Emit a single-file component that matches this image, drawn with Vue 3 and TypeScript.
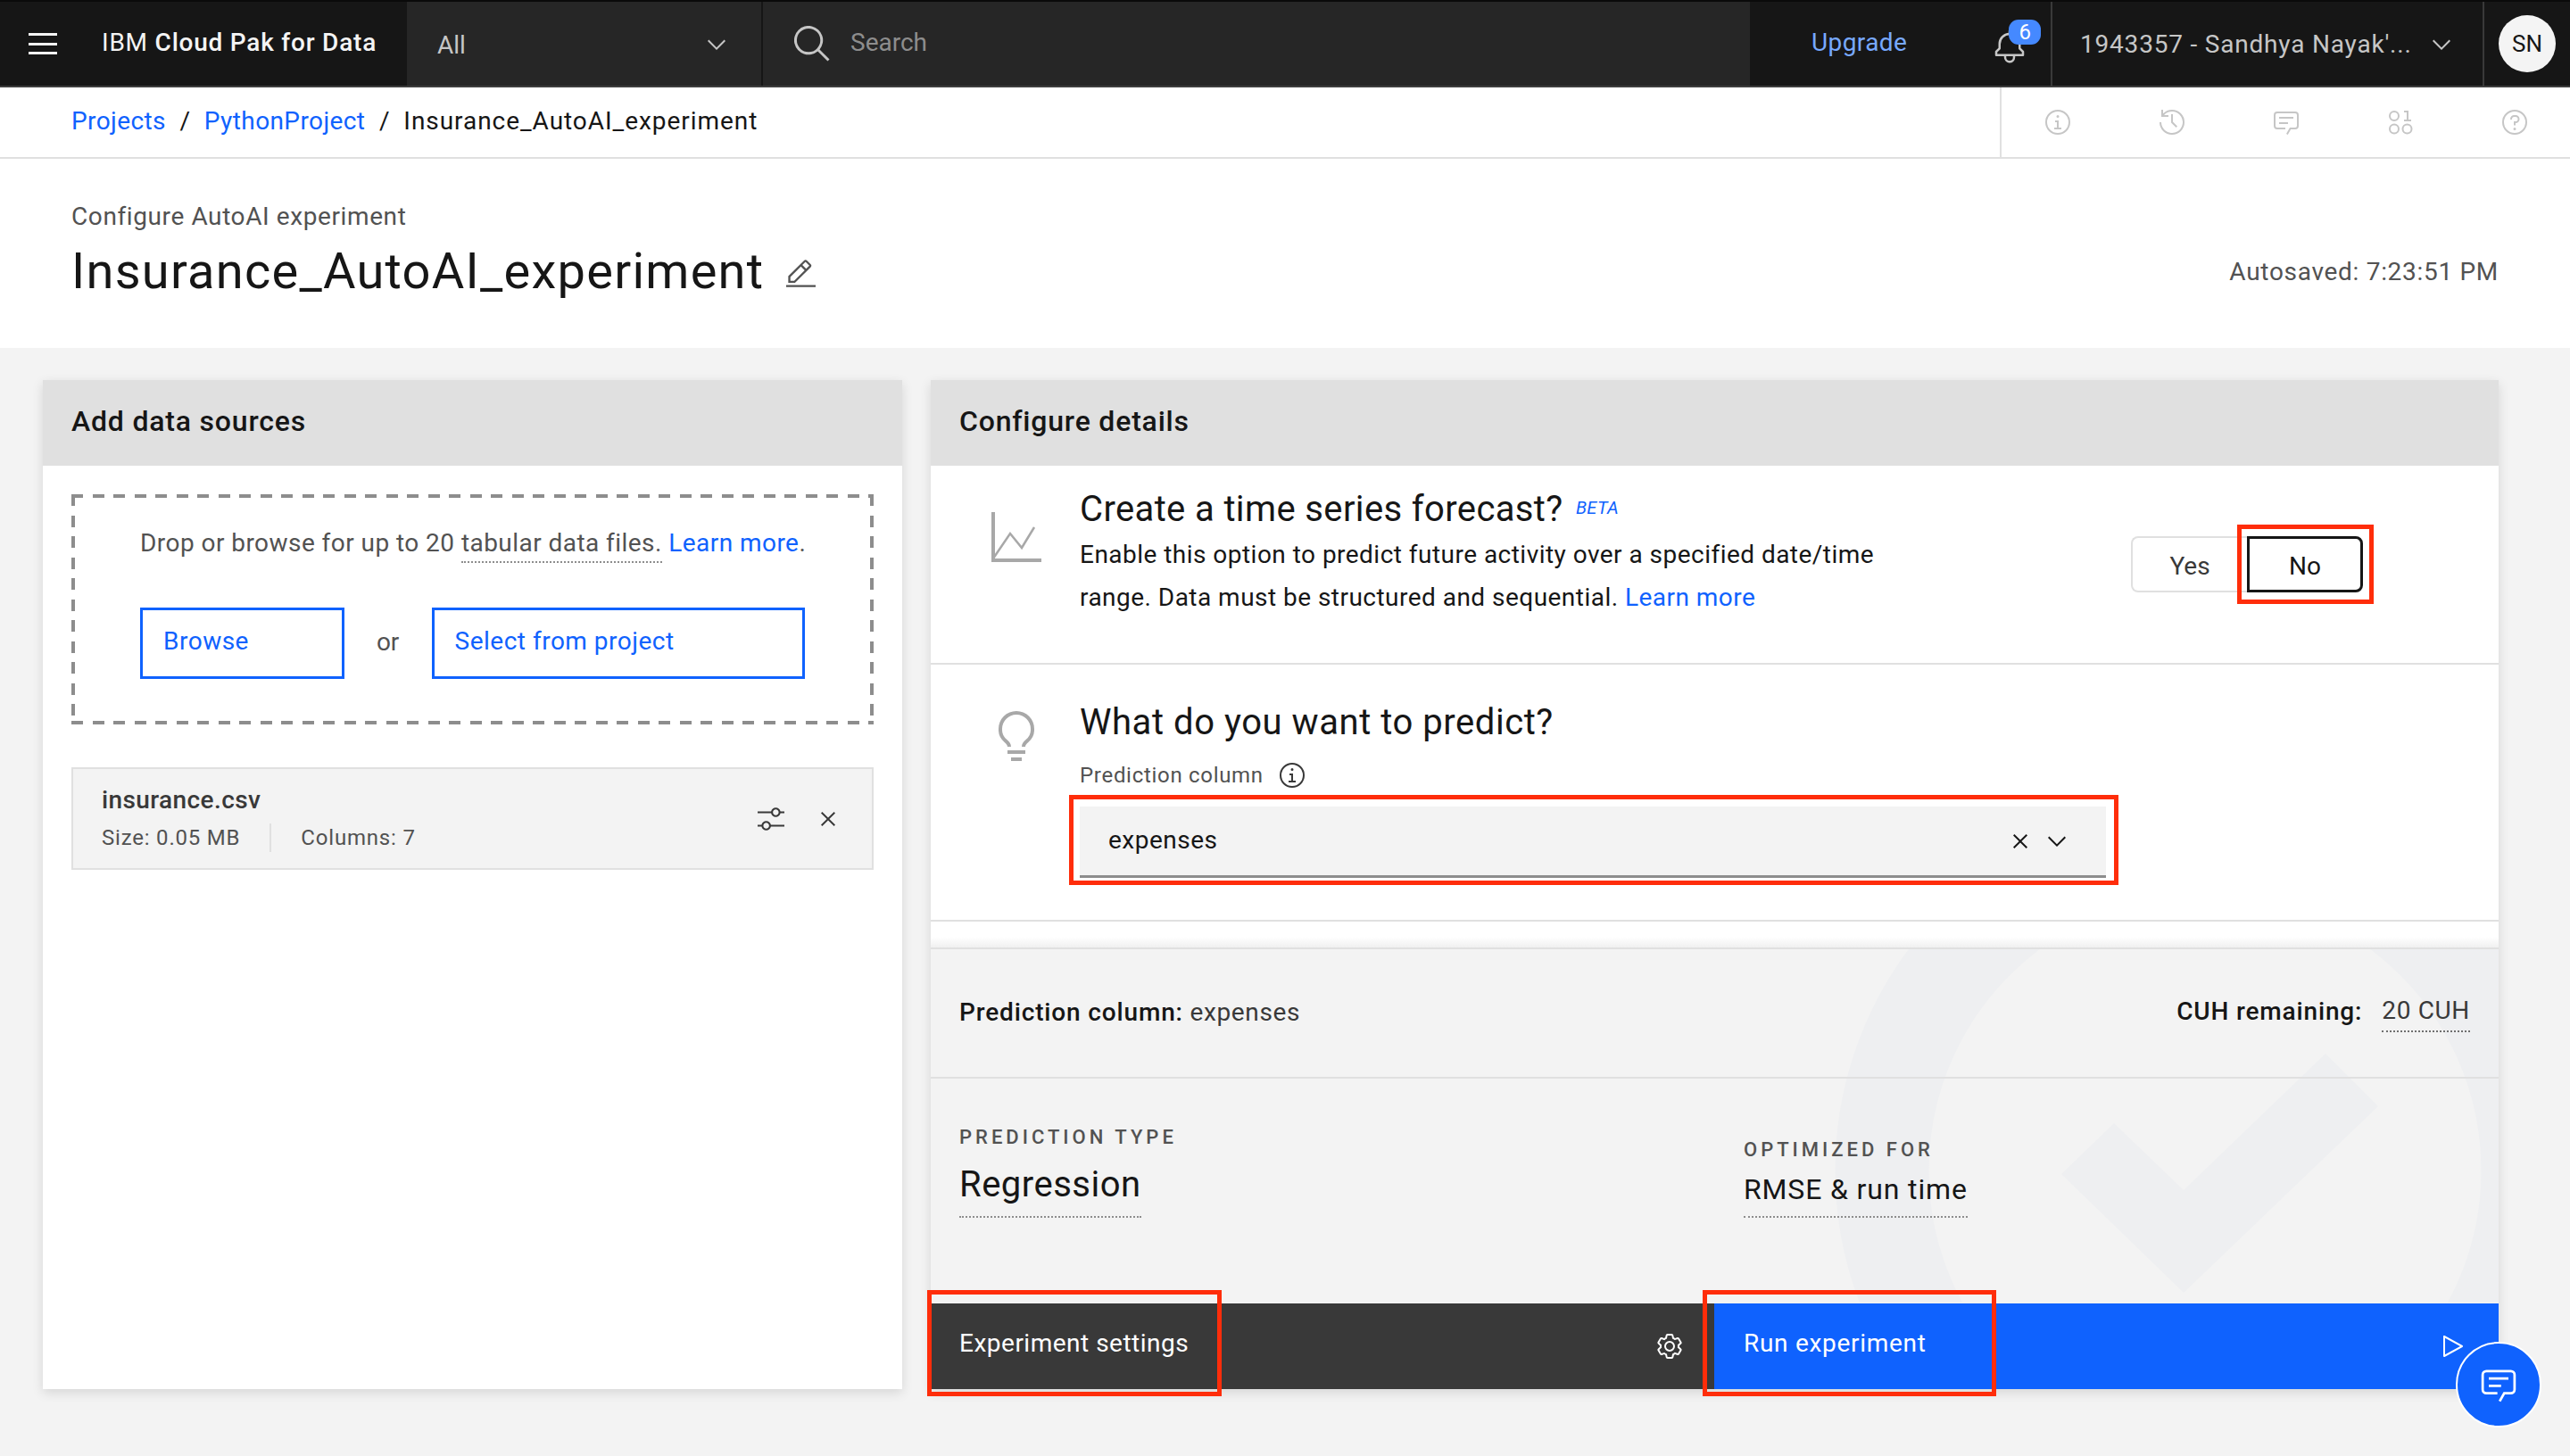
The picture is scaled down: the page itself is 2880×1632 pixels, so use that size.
<template>
  <div class="page">
    <!-- 상단 바 -->
    <header class="topbar">
      <div class="brand">
        <span class="burger"><i></i><i></i><i></i></span>
        <span class="brand-name">IBM <b>Cloud Pak for Data</b></span>
      </div>
      <div class="scope">
        <span>All</span>
        <svg class="chev-sm" viewBox="6 10 20 12"><path :d="icons.chevron" /></svg>
      </div>
      <div class="search">
        <svg class="search-icon" viewBox="2 2 28 28"><path :d="icons.search" /></svg>
        <span>Search</span>
      </div>
      <div class="top-right">
        <a class="upgrade">Upgrade</a>
        <div class="bell">
          <svg viewBox="0 0 32 32"><path :d="icons.bell" /></svg>
          <span class="bell-badge">6</span>
        </div>
      </div>
      <div class="account">
        <span>1943357 - Sandhya Nayak'...</span>
        <svg class="chev-sm" viewBox="6 10 20 12"><path :d="icons.chevron" /></svg>
      </div>
      <div class="avatar-cell"><span class="avatar">SN</span></div>
    </header>

    <!-- 브레드크럼 -->
    <nav class="crumbs">
      <div class="crumb-list">
        <a>Projects</a><span class="sep">/</span>
        <a>PythonProject</a><span class="sep">/</span>
        <span class="crumb-cur">Insurance_AutoAI_experiment</span>
      </div>
      <div class="tools">
        <svg v-for="t in toolIcons" :key="t" viewBox="0 0 32 32"><path :d="t" /></svg>
      </div>
    </nav>

    <section class="head">
      <div>
        <div class="head-sub">Configure AutoAI experiment</div>
        <div class="head-title">
          <h1>Insurance_AutoAI_experiment</h1>
          <svg viewBox="2 2 28 26"><path :d="icons.edit" /></svg>
        </div>
      </div>
      <div class="autosave">Autosaved: 7:23:51 PM</div>
    </section>

    <main class="main">
      <!-- 왼쪽 카드 -->
      <section class="card">
        <h2 class="card-title">Add data sources</h2>
        <div class="left-body">
          <div class="drop">
            <p class="drop-text">Drop or browse for up to 20 <span class="dotted">tabular data files.</span> <a>Learn more</a>.</p>
            <div class="drop-actions">
              <button class="ghost browse">Browse</button>
              <span class="or">or</span>
              <button class="ghost select">Select from project</button>
            </div>
          </div>
          <div class="file">
            <div class="file-info">
              <div class="file-name">insurance.csv</div>
              <div class="file-meta"><span>Size: 0.05 MB</span><span class="meta-col">Columns: 7</span></div>
            </div>
            <svg class="file-adjust" viewBox="2 4 28 24"><path :d="icons.adjust" /></svg>
            <svg class="file-close" viewBox="8 8 16 16"><path :d="icons.close" /></svg>
          </div>
        </div>
      </section>

      <!-- 오른쪽 카드 -->
      <section class="card">
        <h2 class="card-title">Configure details</h2>

        <div class="row forecast">
          <svg class="chart-icon" viewBox="0 0 56 56">
            <path d="M2 0V54H56" stroke-width="4" />
            <path d="M2 52L21 24L34 40L48 17" stroke-width="2.5" />
          </svg>
          <div class="row-text">
            <h3>Create a time series forecast? <em>BETA</em></h3>
            <p>Enable this option to predict future activity over a specified date/time<br />range. Data must be structured and sequential. <a>Learn more</a></p>
          </div>
          <div class="toggle">
            <button class="yes"><span>Yes</span></button>
            <button class="no"><span>No</span></button>
          </div>
        </div>

        <div class="row predict">
          <svg class="bulb-icon" viewBox="6 2 20 28"><path :d="icons.bulb" /></svg>
          <div class="row-text">
            <h3>What do you want to predict?</h3>
            <div class="pred-label">
              <span>Prediction column</span>
              <svg viewBox="0 0 32 32"><path :d="icons.info" /></svg>
            </div>
            <div class="pred-select">
              <span class="pred-value">expenses</span>
              <svg class="sel-x" viewBox="8 8 16 16"><path :d="icons.close" /></svg>
              <svg class="sel-chev" viewBox="6 10 20 12"><path :d="icons.chevron" /></svg>
            </div>
          </div>
        </div>

        <div class="spacer"></div>

        <div class="summary">
          <svg class="watermark" viewBox="0 0 1757 396">
            <circle class="wm-ring" cx="1428" cy="248" r="362" />
            <path class="wm-check" d="M1267 252L1326 195L1404 270L1563 117L1622 176L1404 385Z" />
          </svg>
          <div class="sum-top">
            <div class="sum-pred"><b>Prediction column:</b> expenses</div>
            <div class="cuh"><b>CUH remaining:</b><span>20 CUH</span></div>
          </div>
          <div class="sum-stats">
            <div class="stat">
              <div class="stat-label">PREDICTION TYPE</div>
              <div class="stat-big"><span>Regression</span></div>
            </div>
            <div class="stat stat-opt">
              <div class="stat-label">OPTIMIZED FOR</div>
              <div class="stat-mid"><span>RMSE &amp; run time</span></div>
            </div>
          </div>
        </div>

        <div class="actions">
          <button class="act act-dark">
            <span>Experiment settings</span>
            <svg class="gear" viewBox="2 1 28 30"><path :d="icons.gear" /></svg>
          </button>
          <button class="act act-run">
            <span>Run experiment</span>
            <svg class="play" viewBox="6 4 23 24"><path :d="icons.play" /></svg>
          </button>
        </div>
      </section>
    </main>

    <!-- 빨간 주석 박스 -->
    <div class="mark mark-no"></div>
    <div class="mark mark-select"></div>
    <div class="mark mark-settings"></div>
    <div class="mark mark-run"></div>

    <button class="chat-fab">
      <svg viewBox="0 0 32 32"><path :d="icons.chat" /></svg>
    </button>
  </div>
</template>

<script setup lang="ts">
const icons = {
  chevron: 'M16 22L6 12l1.4-1.4 8.6 8.6 8.6-8.6L26 12z',
  search: 'M29 27.586l-7.552-7.552a11.018 11.018 0 1 0-1.414 1.414L27.586 29zM4 13a9 9 0 1 1 9 9 9.01 9.01 0 0 1-9-9z',
  bell: 'M28.707 19.293L26 16.586V13a10.014 10.014 0 0 0-9-9.95V1h-2v2.05A10.014 10.014 0 0 0 6 13v3.586l-2.707 2.707A1 1 0 0 0 3 20v3a1 1 0 0 0 1 1h7v.777a5.152 5.152 0 0 0 4.5 5.199A5.006 5.006 0 0 0 21 25v-1h7a1 1 0 0 0 1-1v-3a1 1 0 0 0-.293-.707zM19 25a3 3 0 0 1-6 0v-1h6zm8-3H5v-1.586l2.707-2.707A1 1 0 0 0 8 17v-4a8 8 0 0 1 16 0v4a1 1 0 0 0 .293.707L27 20.414z',
  info: 'M17 22v-8h-4v2h2v6h-3v2h8v-2h-3z M16 8a1.5 1.5 0 1 0 1.5 1.5A1.5 1.5 0 0 0 16 8z M16 30a14 14 0 1 1 14-14 14 14 0 0 1-14 14zm0-26a12 12 0 1 0 12 12A12 12 0 0 0 16 4z',
  history: 'M20.59 22L15 16.41V7h2v8.58l5 5.01L20.59 22z M16 2A13.94 13.94 0 0 0 6 6.23V2H4v8h8V8H7.08A12 12 0 1 1 4 16H2A14 14 0 1 0 16 2z',
  chat: 'M17.74 30L16 29l4-7h6a2 2 0 0 0 2-2V8a2 2 0 0 0-2-2H6a2 2 0 0 0-2 2v12a2 2 0 0 0 2 2h9v2H6a4 4 0 0 1-4-4V8a4 4 0 0 1 4-4h20a4 4 0 0 1 4 4v12a4 4 0 0 1-4 4h-4.84z M8 10h16v2H8z M8 16h10v2H8z',
  binary: 'M9 3a6 6 0 1 0 0 12 6 6 0 0 0 0-12zm0 10a4 4 0 1 1 0-8 4 4 0 0 1 0 8z M9 17.5a6 6 0 1 0 0 12 6 6 0 0 0 0-12zm0 10a4 4 0 1 1 0-8 4 4 0 0 1 0 8z M23.5 17.5a6 6 0 1 0 0 12 6 6 0 0 0 0-12zm0 10a4 4 0 1 1 0-8 4 4 0 0 1 0 8z M20 3h5v10h3v2h-8v-2h3V5h-3z',
  help: 'M16 2a14 14 0 1 0 14 14A14 14 0 0 0 16 2zm0 26a12 12 0 1 1 12-12 12 12 0 0 1-12 12z M16 22a1.5 1.5 0 1 0 0 3 1.5 1.5 0 0 0 0-3z M17 8h-1.5a4.49 4.49 0 0 0-4.5 4.5v.5h2v-.5a2.5 2.5 0 0 1 2.5-2.5H17a2.5 2.5 0 0 1 0 5h-2v4.5h2V17a4.5 4.5 0 0 0 0-9z',
  edit: 'M2 26h28v2H2z M25.4 9c.8-.8.8-2 0-2.8l-3.6-3.6c-.8-.8-2-.8-2.8 0l-15 15V24h6.4l15-15zm-5-5L24 7.6l-3 3L17.4 7l3-3zM6 22v-3.6l10-10 3.6 3.6-10 10H6z',
  adjust: 'M30 8h-4.1c-.5-2.3-2.5-4-4.9-4s-4.4 1.7-4.9 4H2v2h14.1c.5 2.3 2.5 4 4.9 4s4.4-1.7 4.9-4H30V8zm-9 4c-1.7 0-3-1.3-3-3s1.3-3 3-3 3 1.3 3 3-1.3 3-3 3z M2 24h4.1c.5 2.3 2.5 4 4.9 4s4.4-1.7 4.9-4H30v-2H15.9c-.5-2.3-2.5-4-4.9-4s-4.4 1.7-4.9 4H2v2zm9-4c1.7 0 3 1.3 3 3s-1.3 3-3 3-3-1.3-3-3 1.3-3 3-3z',
  close: 'M24 9.4L22.6 8 16 14.6 9.4 8 8 9.4 14.6 16 8 22.6 9.4 24 16 17.4 22.6 24 24 22.6 17.4 16 24 9.4z',
  bulb: 'M11 24h10v2H11z M13 28h6v2h-6z M16 2A10 10 0 0 0 6 12a9.19 9.19 0 0 0 3.46 7.62c1 .93 1.54 1.46 1.54 2.38h2c0-1.84-1.11-2.87-2.19-3.86A7.2 7.2 0 0 1 8 12a8 8 0 0 1 16 0 7.2 7.2 0 0 1-2.82 6.14c-1.07 1-2.18 2-2.18 3.86h2c0-.92.53-1.45 1.54-2.39A9.18 9.18 0 0 0 26 12 10 10 0 0 0 16 2z',
  gear: 'M27 16.76c0-.25 0-.5 0-.76s0-.51 0-.77l1.92-1.68A2 2 0 0 0 29.3 11l-2.36-4a2 2 0 0 0-1.73-1 2 2 0 0 0-.64.1l-2.43.82a11.35 11.35 0 0 0-1.31-.75l-.51-2.52a2 2 0 0 0-2-1.61h-4.68a2 2 0 0 0-2 1.61l-.51 2.52a11.48 11.48 0 0 0-1.32.75l-2.38-.86A2 2 0 0 0 6.79 6a2 2 0 0 0-1.73 1L2.7 11a2 2 0 0 0 .41 2.51L5 15.24c0 .25 0 .5 0 .76s0 .51 0 .77l-1.89 1.68A2 2 0 0 0 2.7 21l2.36 4a2 2 0 0 0 1.73 1 2 2 0 0 0 .64-.1l2.43-.82a11.35 11.35 0 0 0 1.31.75l.51 2.52a2 2 0 0 0 2 1.61h4.72a2 2 0 0 0 2-1.61l.51-2.52a11.48 11.48 0 0 0 1.32-.75l2.42.82a2 2 0 0 0 .64.1 2 2 0 0 0 1.73-1l2.28-4a2 2 0 0 0-.41-2.51zM25.21 24l-3.43-1.16a8.86 8.86 0 0 1-2.71 1.57L18.36 28h-4.72l-.71-3.55a9.36 9.36 0 0 1-2.7-1.57L6.79 24l-2.36-4 2.72-2.4a8.9 8.9 0 0 1 0-3.13L4.43 12l2.36-4 3.43 1.16a8.86 8.86 0 0 1 2.71-1.57L13.64 4h4.72l.71 3.55a9.36 9.36 0 0 1 2.7 1.57L25.21 8l2.36 4-2.72 2.4a8.9 8.9 0 0 1 0 3.13L27.57 20z M16 22a6 6 0 1 1 6-6 5.94 5.94 0 0 1-6 6zm0-10a3.91 3.91 0 0 0-4 4 3.91 3.91 0 0 0 4 4 3.91 3.91 0 0 0 4-4 3.91 3.91 0 0 0-4-4z',
  play: 'M7 28a1 1 0 0 1-1-1V5a1 1 0 0 1 1.482-.876l20 11a1 1 0 0 1 0 1.752l-20 11A1 1 0 0 1 7 28zM8 6.69v18.62L24.925 16z',
}

const toolIcons = [icons.info, icons.history, icons.chat, icons.binary, icons.help]
</script>

<style>
html, body { margin: 0; background: #f3f3f3; }
</style>

<style scoped>
.page {
  position: relative;
  width: 2880px;
  height: 1632px;
  overflow: hidden;
  display: flex;
  flex-direction: column;
  background: #f3f3f3;
  color: #161616;
  font-family: Roboto, "Liberation Sans", sans-serif;
  font-size: 28px;
}

h1, h2, h3, p { margin: 0; font-weight: 400; }
a { color: #0f62fe; }
svg { display: block; fill: currentColor; flex: none; }
button { font: inherit; border: none; padding: 0; background: none; }

/* top bar */
.topbar {
  height: 98px;
  box-sizing: border-box;
  border-top: 2px solid #0a0a0a;
  border-bottom: 2px solid #3d3d3d;
  display: flex;
  background: #161616;
  color: #f4f4f4;
}
.brand {
  width: 456px;
  display: flex;
  align-items: center;
  padding-left: 32px;
  box-sizing: border-box;
}
.burger {
  width: 32px;
  height: 24px;
  display: flex;
  flex-direction: column;
  justify-content: space-between;
  margin-right: 50px;
}
.burger i { height: 3px; background: #f4f4f4; }
.brand-name { white-space: nowrap; letter-spacing: .78px; margin-bottom: 3px; }
.brand-name b { font-weight: 500; }
.scope {
  width: 399px;
  box-sizing: border-box;
  background: #262626;
  border-right: 2px solid #161616;
  padding: 2px 40px 0 34px;
  display: flex;
  align-items: center;
  justify-content: space-between;
  color: #c6c6c6;
}
.chev-sm { width: 20px; height: 12px; color: #c6c6c6; }
.search {
  width: 1106px;
  box-sizing: border-box;
  background: #262626;
  display: flex;
  align-items: center;
  padding-left: 35px;
  color: #8d8d8d;
}
.search-icon { width: 41px; height: 41px; margin-right: 22px; color: #c6c6c6; }
.search span { margin-bottom: 3px; }
.top-right {
  width: 339px;
  display: flex;
  align-items: center;
  padding-left: 69px;
  box-sizing: border-box;
  border-right: 2px solid #393939;
}
.upgrade { color: #78a9ff; letter-spacing: .4px; margin-bottom: 3px; }
.bell { position: relative; margin-left: 95px; width: 40px; height: 40px; color: #c6c6c6; margin-top: 8px; }
.bell svg { width: 40px; height: 40px; }
.bell-badge {
  position: absolute;
  left: 19px;
  top: -11px;
  width: 36px;
  height: 28px;
  border-radius: 11px;
  background: #4589ff;
  color: #fff;
  font-size: 24px;
  line-height: 28px;
  text-align: center;
}
.account {
  width: 484px;
  box-sizing: border-box;
  border-right: 2px solid #393939;
  display: flex;
  align-items: center;
  padding: 1px 36px 0 31px;
  justify-content: space-between;
  color: #c6c6c6;
  white-space: nowrap;
  letter-spacing: .8px;
}
.avatar-cell { flex: 1; display: flex; align-items: center; justify-content: center; }
.avatar {
  width: 64px;
  height: 64px;
  border-radius: 50%;
  background: #f4f4f4;
  color: #161616;
  font-size: 26px;
  display: flex;
  align-items: center;
  justify-content: center;
}

/* breadcrumb */
.crumbs {
  height: 80px;
  box-sizing: border-box;
  border-bottom: 2px solid #e0e0e0;
  background: #fff;
  display: flex;
  justify-content: space-between;
}
.crumb-list { display: flex; align-items: center; padding: 0 0 3px 80px; white-space: nowrap; letter-spacing: .4px; }
.sep { margin: 0 15.5px; }
.crumb-cur { letter-spacing: .95px; }
.tools {
  width: 639px;
  box-sizing: border-box;
  border-left: 2px solid #e0e0e0;
  display: flex;
  align-items: center;
  padding-left: 47px;
  gap: 96px;
  color: #c6c6c6;
}
.tools svg { width: 32px; height: 32px; }

/* page head */
.head {
  height: 212px;
  box-sizing: border-box;
  background: #fff;
  padding: 47px 80px 0;
  display: flex;
  justify-content: space-between;
  align-items: flex-start;
}
.head-sub { color: #525252; line-height: 36px; letter-spacing: .6px; }
.head-title { display: flex; align-items: center; gap: 25px; margin-top: 7px; }
.head-title h1 { font-size: 56px; line-height: 72px; white-space: nowrap; letter-spacing: 1.25px; }
.head-title svg { width: 33px; height: 31px; color: #525252; margin-top: 4px; }
.autosave { color: #525252; margin-top: 63px; letter-spacing: .7px; }

/* cards */
.main {
  flex: 1;
  box-sizing: border-box;
  padding: 36px 80px 75px 48px;
  display: grid;
  grid-template-columns: 963px 1757px;
  gap: 32px;
  min-height: 0;
}
.card {
  display: flex;
  flex-direction: column;
  background: #fff;
  box-shadow: 0 4px 12px rgba(0, 0, 0, .12);
  min-height: 0;
}
.card-title {
  height: 96px;
  flex: none;
  box-sizing: border-box;
  padding-left: 32px;
  background: #e0e0e0;
  font-size: 32px;
  font-weight: 500;
  line-height: 92px;
  letter-spacing: .8px;
}

/* left */
.left-body { padding: 32px; }
.drop {
  height: 258px;
  box-sizing: border-box;
  padding: 33px 77px 0;
  background:
    repeating-linear-gradient(90deg, #8d8d8d 0 13px, transparent 13px 23.5px) top / 100% 4px no-repeat,
    repeating-linear-gradient(90deg, #8d8d8d 0 13px, transparent 13px 23.5px) bottom / 100% 4px no-repeat,
    repeating-linear-gradient(#8d8d8d 0 13px, transparent 13px 23.5px) left / 4px 100% no-repeat,
    repeating-linear-gradient(#8d8d8d 0 13px, transparent 13px 23.5px) right / 4px 100% no-repeat;
}
.drop-text { color: #525252; white-space: nowrap; line-height: 44px; letter-spacing: .45px; }
.dotted { border-bottom: 2px dotted #8d8d8d; padding-bottom: 4px; }
.drop-actions { display: flex; align-items: center; margin-top: 50px; }
.ghost {
  height: 80px;
  box-sizing: border-box;
  border: 3px solid #0f62fe;
  color: #0f62fe;
  text-align: left;
  padding: 0 0 5px 23px;
  background: #fff;
  letter-spacing: .5px;
}
.browse { width: 229px; }
.or { width: 98px; text-align: center; color: #525252; margin-bottom: 3px; }
.select { width: 419px; }
.file {
  height: 115px;
  box-sizing: border-box;
  margin-top: 48px;
  border: 2px solid #e0e0e0;
  background: #f3f3f3;
  display: flex;
  align-items: center;
  padding-left: 32px;
}
.file-info { flex: 1; }
.file-name { font-weight: 500; color: #393939; line-height: 36px; letter-spacing: .4px; margin-top: -2px; }
.file-meta { display: flex; font-size: 24px; line-height: 32px; color: #525252; margin-top: 8px; letter-spacing: .8px; }
.meta-col { margin-left: 33px; padding-left: 33px; border-left: 2px solid #e0e0e0; }
.file-adjust { width: 30px; height: 26px; color: #393939; }
.file-close { width: 16px; height: 16px; margin: 0 41px; color: #393939; }

/* right */
.row { display: flex; border-bottom: 2px solid #e0e0e0; box-sizing: border-box; }
.forecast { height: 223px; padding-left: 68px; }
.predict { height: 288px; padding-left: 76px; }
.spacer { height: 29px; flex: none; background: linear-gradient(#fff 60%, #f0f0f0); border-bottom: 2px solid #e0e0e0; box-sizing: content-box; }
.chart-icon { width: 56px; height: 56px; margin-top: 52px; stroke: #a8a8a8; fill: none; }
.bulb-icon { width: 40px; height: 56px; margin-top: 52px; color: #a8a8a8; }
.row-text { flex: 1; margin-left: 43px; }
.predict .row-text { margin-left: 51px; }
.row h3 { font-size: 40px; line-height: 50px; letter-spacing: .37px; }
.predict h3 { letter-spacing: .55px; }
.forecast h3 { margin-top: 22px; white-space: nowrap; }
.forecast h3 em { font-size: 20px; color: #0f62fe; vertical-align: 8px; margin-left: 4px; }
.forecast p { line-height: 48px; margin-top: 2px; letter-spacing: .47px; }
.toggle { display: flex; margin: 79px 152px 0 0; }
.toggle button { width: 130px; height: 63px; box-sizing: border-box; }
.toggle span { position: relative; top: 2px; }
.yes { border: 2px solid #e0e0e0; border-right: none; border-radius: 8px 0 0 8px; color: #393939; }
.no { border: 3px solid #161616 !important; border-radius: 0 8px 8px 0; color: #161616; }
.predict h3 { margin-top: 40px; }
.pred-label { display: flex; align-items: center; gap: 16px; font-size: 24px; color: #525252; margin-top: 18px; height: 32px; letter-spacing: .7px; }
.pred-label svg { width: 32px; height: 32px; color: #393939; }
.pred-select {
  width: 1150px;
  height: 80px;
  box-sizing: border-box;
  margin-top: 19px;
  background: #f3f3f3;
  border-bottom: 3px solid #8d8d8d;
  display: flex;
  align-items: center;
  padding: 0 45px 0 32px;
}
.pred-value { flex: 1; letter-spacing: .5px; margin-bottom: 2px; }
.sel-x { width: 16px; height: 16px; margin-right: 23px; color: #161616; }
.sel-chev { width: 20px; height: 12px; color: #161616; }

.summary { position: relative; flex: 1; background: #f3f3f3; min-height: 0; overflow: hidden; }
.watermark { position: absolute; left: 0; top: 0; width: 1757px; height: 396px; }
.wm-ring { fill: none; stroke: #eeeff1; stroke-width: 105; }
.wm-check { fill: #eeeff1; }
.sum-top {
  position: relative;
  height: 145px;
  box-sizing: border-box;
  border-bottom: 2px solid #e0e0e0;
  padding: 0 32px;
  display: flex;
  align-items: center;
  justify-content: space-between;
  color: #393939;
  letter-spacing: .65px;
}
.sum-top b { font-weight: 500; color: #161616; letter-spacing: .85px; }
.sum-pred { margin-bottom: 2px; }
.cuh { display: flex; align-items: center; gap: 22px; }
.cuh b { margin-bottom: 4px; }
.cuh span { border-bottom: 2px dotted #6f6f6f; padding-bottom: 6px; margin-top: 2px; }
.sum-stats { position: relative; display: flex; padding: 0 32px; }
.stat { width: 879px; flex: none; box-sizing: border-box; padding-top: 52px; }
.stat-opt { padding-top: 66px; }
.stat-label { font-size: 22px; line-height: 28px; font-weight: 500; color: #525252; letter-spacing: 4px; }
.stat-big { font-size: 40px; line-height: 50px; margin-top: 14px; letter-spacing: .5px; }
.stat-mid { font-size: 32px; line-height: 40px; margin-top: 10px; letter-spacing: .85px; }
.stat-big span, .stat-mid span { display: inline-block; border-bottom: 2px dotted #8d8d8d; padding-bottom: 10px; }

.actions { height: 96px; flex: none; display: grid; grid-template-columns: 878px 879px; }
.act {
  display: flex;
  align-items: center;
  justify-content: space-between;
  color: #fff;
  padding: 0 39px 0 33px;
  letter-spacing: .7px;
}
.act span { margin-bottom: 7px; }
.act-dark { background: #393939; padding: 0 36px 0 32px; letter-spacing: .5px; }
.act-run { background: #0f62fe; }
.gear { width: 28px; height: 30px; }
.play { width: 23px; height: 24px; }

/* annotations */
.mark { position: absolute; box-sizing: border-box; border: 5px solid #ff2d0a; }
.mark-no { left: 2507px; top: 588px; width: 153px; height: 89px; }
.mark-select { left: 1198px; top: 891px; width: 1176px; height: 101px; }
.mark-settings { left: 1039px; top: 1446px; width: 330px; height: 119px; }
.mark-run { left: 1908px; top: 1446px; width: 329px; height: 119px; }

.chat-fab {
  position: absolute;
  left: 2752px;
  top: 1504px;
  width: 96px;
  height: 96px;
  box-sizing: border-box;
  border: 2px solid #fff;
  border-radius: 50%;
  background: #0f62fe;
  color: #fff;
  display: flex;
  align-items: center;
  justify-content: center;
}
.chat-fab svg { width: 44px; height: 44px; }
</style>
